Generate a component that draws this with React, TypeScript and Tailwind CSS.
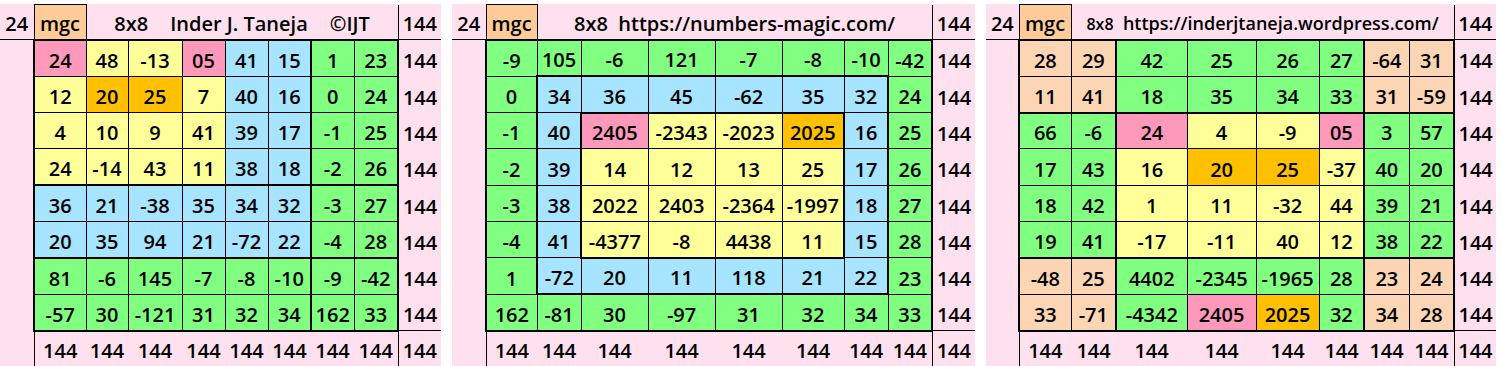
import React from "react";

type Panel = {
  width: string;
  cols: string[]; // left, 8 grid columns, right
  title: React.ReactNode;
  values: string[][];
  colors: string[];
  h: (r: number, c: number) => boolean; // thick line above row r at column c
  v: (r: number, c: number) => boolean; // thick line left of column c at row r
};

const BG: Record<string, string> = {
  p: "bg-[#ff99bb]",
  y: "bg-[#ffff99]",
  o: "bg-[#ffc000]",
  b: "bg-[#a6e4ff]",
  g: "bg-[#80ff80]",
  c: "bg-[#fcd5b4]",
};

const panels: Panel[] = [
  {
    width: "w-[441px]",
    cols: ["w-[34px]", "w-[52px]", "w-[42px]", "w-[54px]", "w-[43px]", "w-[43px]", "w-[43px]", "w-[43px]", "w-[44px]", "w-[43px]"],
    title: (
      <div className="flex justify-center gap-[22px]">
        <span>8x8</span>
        <span>Inder J. Taneja</span>
        <span>©IJT</span>
      </div>
    ),
    values: [
      ["24", "48", "-13", "05", "41", "15", "1", "23"],
      ["12", "20", "25", "7", "40", "16", "0", "24"],
      ["4", "10", "9", "41", "39", "17", "-1", "25"],
      ["24", "-14", "43", "11", "38", "18", "-2", "26"],
      ["36", "21", "-38", "35", "34", "32", "-3", "27"],
      ["20", "35", "94", "21", "-72", "22", "-4", "28"],
      ["81", "-6", "145", "-7", "-8", "-10", "-9", "-42"],
      ["-57", "30", "-121", "31", "32", "34", "162", "33"],
    ],
    colors: ["pyypbbgg", "yooybbgg", "yyyybbgg", "yyyybbgg", "bbbbbbgg", "bbbbbbgg", "gggggggg", "gggggggg"],
    h: (r) => r === 0 || r === 8 || r === 4 || r === 6,
    v: (_r, c) => c === 0 || c === 8 || c === 6,
  },
  {
    width: "w-[523px]",
    cols: ["w-[34px]", "w-[51px]", "w-[44px]", "w-[67px]", "w-[67px]", "w-[67px]", "w-[62px]", "w-[44px]", "w-[44px]", "w-[43px]"],
    title: "8x8  https://numbers-magic.com/",
    values: [
      ["-9", "105", "-6", "121", "-7", "-8", "-10", "-42"],
      ["0", "34", "36", "45", "-62", "35", "32", "24"],
      ["-1", "40", "2405", "-2343", "-2023", "2025", "16", "25"],
      ["-2", "39", "14", "12", "13", "25", "17", "26"],
      ["-3", "38", "2022", "2403", "-2364", "-1997", "18", "27"],
      ["-4", "41", "-4377", "-8", "4438", "11", "15", "28"],
      ["1", "-72", "20", "11", "118", "21", "22", "23"],
      ["162", "-81", "30", "-97", "31", "32", "34", "33"],
    ],
    colors: ["gggggggg", "gbbbbbbg", "gbpyyobg", "gbyyyybg", "gbyyyybg", "gbyyyybg", "gbbbbbbg", "gggggggg"],
    h: (r, c) =>
      r === 0 || r === 8 || ((r === 1 || r === 7) && c >= 1 && c <= 6) || ((r === 2 || r === 6) && c >= 2 && c <= 5),
    v: (r, c) =>
      c === 0 || c === 8 || ((c === 1 || c === 7) && r >= 1 && r <= 6) || ((c === 2 || c === 6) && r >= 2 && r <= 5),
  },
  {
    width: "w-[510px]",
    cols: ["w-[33px]", "w-[52px]", "w-[45px]", "w-[71px]", "w-[69px]", "w-[63px]", "w-[45px]", "w-[45px]", "w-[45px]", "w-[42px]"],
    title: (
      <span className="text-[18px]">
        <span className="text-[16px]">8x8</span>
        {"  https://inderjtaneja.wordpress.com/"}
      </span>
    ),
    values: [
      ["28", "29", "42", "25", "26", "27", "-64", "31"],
      ["11", "41", "18", "35", "34", "33", "31", "-59"],
      ["66", "-6", "24", "4", "-9", "05", "3", "57"],
      ["17", "43", "16", "20", "25", "-37", "40", "20"],
      ["18", "42", "1", "11", "-32", "44", "39", "21"],
      ["19", "41", "-17", "-11", "40", "12", "38", "22"],
      ["-48", "25", "4402", "-2345", "-1965", "28", "23", "24"],
      ["33", "-71", "-4342", "2405", "2025", "32", "34", "28"],
    ],
    colors: ["ccggggcc", "ccggggcc", "ggpyypgg", "ggyooygg", "ggyyyygg", "ggyyyygg", "ccggggcc", "ccgpogcc"],
    h: (r) => r === 0 || r === 2 || r === 6 || r === 8,
    v: (_r, c) => c === 0 || c === 2 || c === 6 || c === 8,
  },
];

const txt = "align-bottom text-center pb-[5px] leading-[20px] whitespace-nowrap";

function Square({ p }: { p: Panel }) {
  const edges = (r: number, c: number) =>
    [
      p.h(r, c) ? "border-t-2" : "border-t",
      p.h(r + 1, c) ? "border-b-2" : "border-b",
      p.v(r, c) ? "border-l-2" : "border-l",
      p.v(r, c + 1) ? "border-r-2" : "border-r",
    ].join(" ");

  return (
    <table className={`${p.width} table-fixed border-collapse bg-[#ffe0ef] shrink-0`}>
      <colgroup>
        {p.cols.map((w, i) => (
          <col key={i} className={w} />
        ))}
      </colgroup>
      <tbody>
        <tr className="h-[35px]">
          <td className={`${txt} border-b border-r border-black`}>24</td>
          <td className={`${txt} border border-black bg-[#ffcc99]`}>mgc</td>
          <td colSpan={7} className={`${txt} whitespace-pre border-b border-black`}>
            {p.title}
          </td>
          <td className={`${txt} border-b border-l border-black`}>144</td>
        </tr>
        {p.values.map((row, r) => (
          <tr key={r} className="h-[36px]">
            <td />
            {row.map((val, c) => (
              <td key={c} className={`${txt} ${BG[p.colors[r][c]]} ${edges(r, c)} border-black`}>
                {val}
              </td>
            ))}
            <td className={txt}>144</td>
          </tr>
        ))}
        <tr className="h-[35px]">
          <td />
          {p.values[0].map((_, c) => (
            <td
              key={c}
              className={`${txt} border-black ${c === 0 ? "border-l" : ""} ${c === 7 ? "border-r" : ""}`}
            >
              144
            </td>
          ))}
          <td className={`${txt} border-t border-l border-black`}>144</td>
        </tr>
      </tbody>
    </table>
  );
}

export default function App() {
  return (
    <div className="w-[1502px] h-[366px] bg-white pt-[4px] flex gap-[11px] font-['Open_Sans',sans-serif] font-semibold text-[20px] text-black">
      {panels.map((p, i) => (
        <Square key={i} p={p} />
      ))}
    </div>
  );
}
